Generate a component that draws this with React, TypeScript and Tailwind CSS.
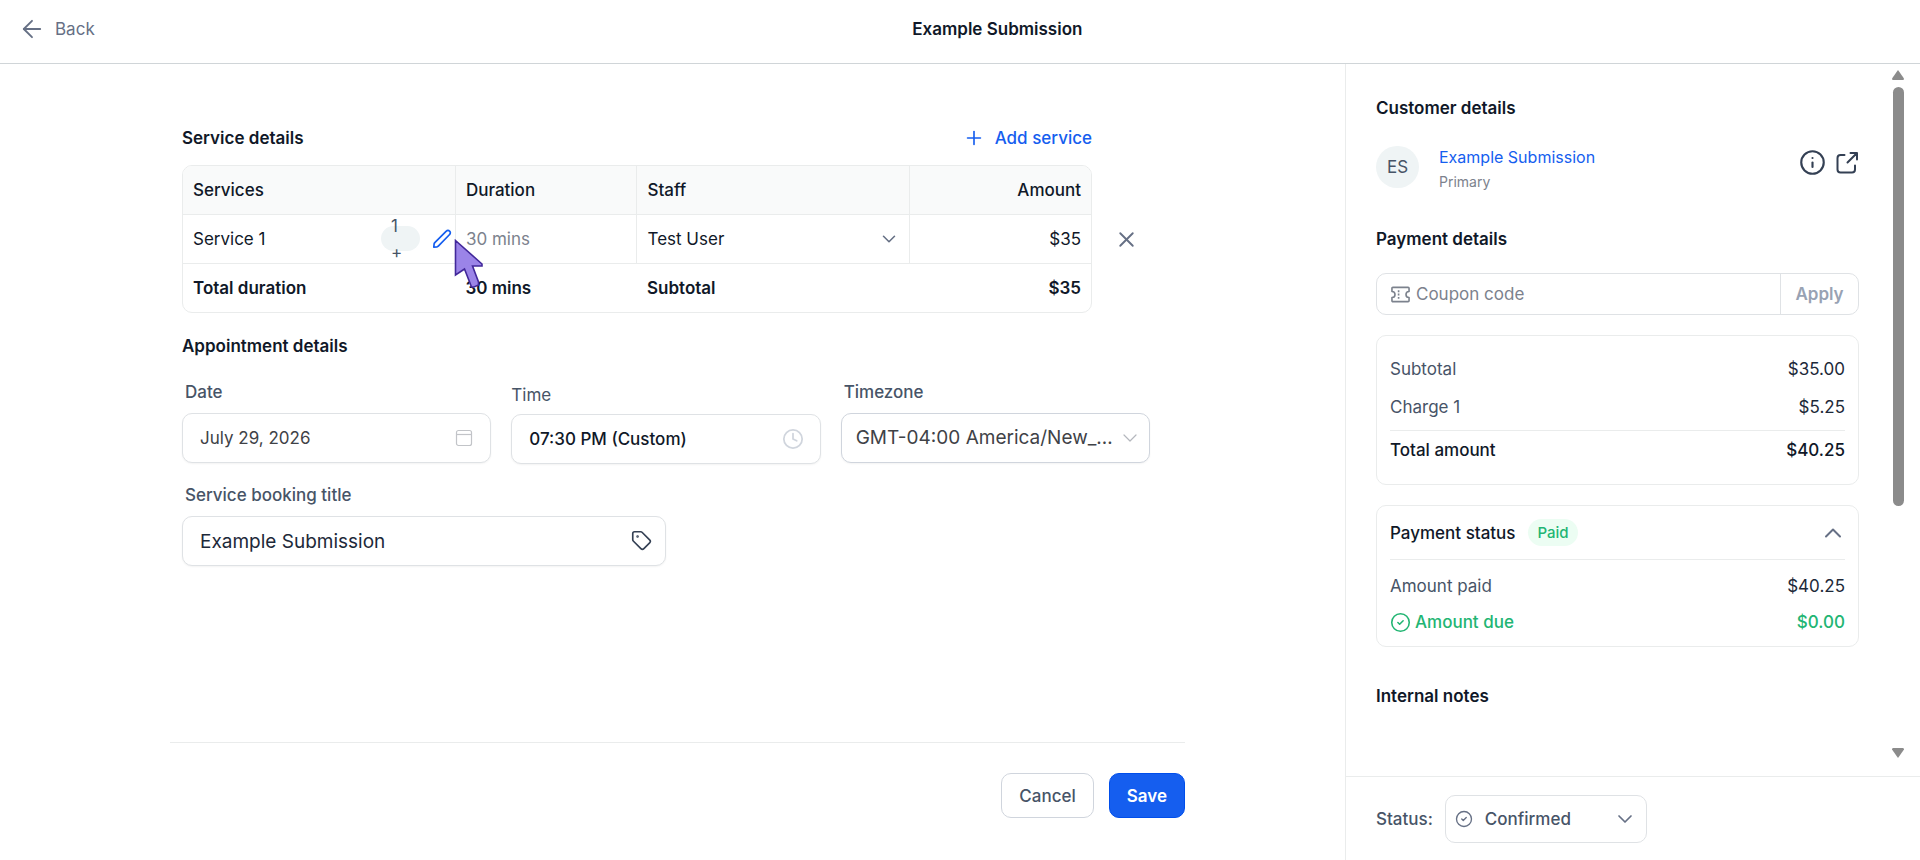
import { useState } from 'react';
import { ArrowLeft, ChevronDown, ChevronUp, CircleCheck, Clock, Info, Plus, Tag, X } from 'lucide-react';

const charges = [
  { label: 'Subtotal', amount: '$35.00' },
  { label: 'Charge 1', amount: '$5.25' },
];

const inputClass =
  'h-[50px] w-full rounded-[10px] border border-[#dfe2e5] bg-white pl-[17px] pr-12 shadow-xs outline-none focus:border-[#155eef]';

const PencilIcon = () => (
  <svg width="20" height="20" viewBox="0 0 20 20" fill="none" stroke="currentColor" strokeWidth="1.7" strokeLinejoin="round">
    <path d="M1.800 18.200l.3-3.200c.1-.6.3-1 .7-1.400L14.300 2.200a2.200 2.200 0 0 1 3.300 0 2.200 2.200 0 0 1 0 3.300L6.300 17.100c-.4.4-.8.6-1.400.7z" />
  </svg>
);

const CalendarIcon = () => (
  <svg
    className="pointer-events-none absolute right-[18px] top-4"
    width="18" height="18" viewBox="0 0 18 18" fill="none" stroke="#c2c4c8" strokeWidth="1.2"
  >
    <rect x="1.500" y="1.500" width="15" height="15" rx="2" />
    <path d="M1.500 5.500h15" />
  </svg>
);

const TicketIcon = () => (
  <svg width="19" height="19" viewBox="0 0 20 20" fill="none" stroke="currentColor" strokeWidth="1.7" strokeLinejoin="round">
    <path d="M2 2.500h16a1 1 0 0 1 1 1v3.300a3.200 3.200 0 0 0 0 6.400v3.300a1 1 0 0 1-1 1H2a1 1 0 0 1-1-1v-3.300a3.200 3.200 0 0 0 0-6.400V3.500a1 1 0 0 1 1-1z" />
    <path d="M8 5.500v2M8 9v2M8 12.500v2" />
  </svg>
);

const ShareIcon = () => (
  <svg width="24" height="24" viewBox="0 0 24 24" fill="none" stroke="currentColor" strokeWidth="2" strokeLinecap="round" strokeLinejoin="round">
    <path d="M9.500 4H5.500a3 3 0 0 0-3 3v11.500a3 3 0 0 0 3 3H17a3 3 0 0 0 3-3V14.500" />
    <path d="M15.500 2H22v6.500M22 2L12.500 11.500" />
  </svg>
);

const ServiceTable = () => (
  <div className="flex items-center">
    <div className="min-w-0 flex-1 overflow-hidden rounded-[10px] border border-[#eaecec]">
      <table className="w-full table-fixed text-left text-[#101828]">
        <thead>
          <tr className="h-12 bg-[#f9fafa]">
            <th className="w-[30%] border-r border-[#eaecec] px-2.5 font-medium">Services</th>
            <th className="w-[20%] border-r border-[#eaecec] px-2.5 font-medium">Duration</th>
            <th className="w-[30%] border-r border-[#eaecec] px-2.5 font-medium">Staff</th>
            <th className="w-[20%] px-2.5 text-right font-medium">Amount</th>
          </tr>
        </thead>
        <tbody>
          <tr className="h-[49px] border-y border-[#eaecec]">
            <td className="border-r border-[#eaecec] pl-2.5 pr-[3px]">
              <div className="flex items-center">
                <span className="flex-1">Service 1</span>
                <span className="mr-3 flex h-[25px] w-[39px] flex-col justify-center rounded-full bg-[#eff4f5] pl-2.5 leading-[26px] text-[#475467]">
                  <span>1</span>
                  <span>+</span>
                </span>
                <button type="button" aria-label="Edit service" className="text-[#155eef]">
                  <PencilIcon />
                </button>
              </div>
            </td>
            <td className="border-r border-[#eaecec] px-2.5 text-[#7c828d]">30 mins</td>
            <td className="border-r border-[#eaecec] px-2.5">
              <div className="relative">
                <select aria-label="Staff" className="block w-full appearance-none bg-transparent outline-none">
                  <option>Test User</option>
                </select>
                <ChevronDown size={22} strokeWidth={1.7} className="pointer-events-none absolute -right-px top-0.5 text-[#667085]" />
              </div>
            </td>
            <td className="px-2.5 text-right">$35</td>
          </tr>
          <tr className="h-[49px] font-semibold">
            <td className="px-2.5">Total duration</td>
            <td className="px-2.5">30 mins</td>
            <td className="px-2.5">Subtotal</td>
            <td className="px-2.5 text-right">$35</td>
          </tr>
        </tbody>
      </table>
    </div>
    <button type="button" aria-label="Remove service" className="ml-[18px] mr-2 flex h-8 w-8 items-center justify-center text-[#667085]">
      <X size={25} strokeWidth={1.8} />
    </button>
  </div>
);

const AppointmentForm = () => {
  const [title, setTitle] = useState('Example Submission');

  return (
    <>
      <div className="mt-5 grid grid-cols-3 gap-x-5">
        <div>
          <label htmlFor="date" className="block pl-[3px] font-medium text-[#475467]">Date</label>
          <div className="relative mt-2">
            <input id="date" defaultValue="July 29, 2026" className={`${inputClass} text-[#404247]`} />
            <CalendarIcon />
          </div>
        </div>
        <div className="pt-[3px]">
          <label htmlFor="time" className="block text-[#475467]">Time</label>
          <div className="relative mt-1.5">
            <input id="time" defaultValue="07:30 PM (Custom)" className={`${inputClass} font-medium text-[#101828]`} />
            <Clock size={22} strokeWidth={1.9} className="pointer-events-none absolute right-[17px] top-3.5 text-[#d0d5dd]" />
          </div>
        </div>
        <div>
          <label htmlFor="timezone" className="block pl-[3px] font-medium text-[#475467]">Timezone</label>
          <div className="relative mt-2">
            <select
              id="timezone"
              className="h-[50px] w-full appearance-none truncate rounded-[10px] border border-[#d0d5dd] bg-white pl-3.5 pr-9 text-[19px] text-[#404247] shadow-xs outline-none"
            >
              <option>GMT-04:00 America/New_York</option>
            </select>
            <ChevronDown size={24} strokeWidth={1.2} className="pointer-events-none absolute right-2 top-[13px] text-[#b4b7bd]" />
          </div>
        </div>
      </div>

      <div className="mt-[18px] w-1/2">
        <label htmlFor="title" className="block pl-[3px] font-medium text-[#475467]">Service booking title</label>
        <div className="relative mt-2">
          <input
            id="title"
            value={title}
            onChange={(e) => setTitle(e.target.value)}
            className={`${inputClass} text-[19px] text-[#1d2939]`}
          />
          <Tag size={21} strokeWidth={1.9} className="pointer-events-none absolute right-3.5 top-3.5 text-[#344054]" />
        </div>
      </div>
    </>
  );
};

const Sidebar = () => (
  <aside className="flex w-[575px] shrink-0 flex-col border-l border-[#eaecec]">
    <div className="flex min-h-0 flex-1 pr-4">
      <div className="min-w-0 flex-1 overflow-hidden pl-[30px] pt-[31px]">
        <h2 className="font-semibold">Customer details</h2>
        <div className="mt-6 flex items-start">
          <span className="mt-px flex h-[42px] w-[43px] items-center justify-center rounded-full bg-[#eff4f5] text-[#475467]">ES</span>
          <div className="ml-5 flex-1">
            <a href="#customer" className="block text-base leading-6 text-[#155eef]">Example Submission</a>
            <p className="text-sm leading-[26px] text-[#7c828d]">Primary</p>
          </div>
          <div className="mt-1 flex items-center gap-[9px] text-[#344054]">
            <button type="button" aria-label="Customer info"><Info size={27} strokeWidth={1.9} /></button>
            <button type="button" aria-label="Open customer"><ShareIcon /></button>
          </div>
        </div>

        <h2 className="mt-[31px] font-semibold">Payment details</h2>
        <div className="mt-[21px] flex h-[42px] rounded-[10px] border border-[#dfe2e5]">
          <label htmlFor="coupon" className="flex items-center pl-3.5 text-[#7c828d]" aria-label="Coupon code">
            <TicketIcon />
          </label>
          <input id="coupon" placeholder="Coupon code" className="min-w-0 flex-1 pl-1.5 outline-none placeholder:text-[#7c828d]" />
          <button type="button" className="w-[78px] border-l border-[#dfe2e5] font-semibold text-[#98a2b3]">Apply</button>
        </div>

        <section className="mt-5 rounded-[10px] border border-[#eaecec] px-[13px] pb-[21px] pt-5">
          {charges.map((charge) => (
            <div key={charge.label} className="mb-3 flex justify-between">
              <span className="text-[#475467]">{charge.label}</span>
              <span className="text-[#1d2939]">{charge.amount}</span>
            </div>
          ))}
          <div className="-mt-0.5 flex justify-between border-t border-[#eaecec] pt-1.5 font-medium">
            <span>Total amount</span>
            <span>$40.25</span>
          </div>
        </section>

        <section className="mt-5 rounded-[10px] border border-[#eaecec] px-[13px] pb-[11px]">
          <div className="flex h-[54px] items-center border-b border-[#eaecec]">
            <h3 className="font-medium">Payment status</h3>
            <span className="ml-[13px] rounded-full bg-[#ecfdf3] px-[9px] text-[15px] font-medium leading-[27px] text-[#22b573]">Paid</span>
            <button type="button" aria-label="Collapse payment status" className="-mr-0.5 ml-auto text-[#667085]">
              <ChevronUp size={28} strokeWidth={1.7} />
            </button>
          </div>
          <div className="mt-[13px] flex justify-between">
            <span className="text-[#475467]">Amount paid</span>
            <span className="text-[#1d2939]">$40.25</span>
          </div>
          <div className="mt-2.5 flex justify-between font-medium text-[#22b573]">
            <span className="flex items-center gap-1">
              <CircleCheck size={21} strokeWidth={1.8} />
              Amount due
            </span>
            <span>$0.00</span>
          </div>
        </section>

        <h2 className="mt-9 font-semibold">Internal notes</h2>
      </div>

      {/* Scroll track */}
      <div className="ml-[33px] flex w-3 flex-col items-center pb-[18px] pt-1.5" aria-hidden="true">
        <svg width="12" height="10" viewBox="0 0 12 10" fill="#8b8b8b"><path d="M6 0l6 8.500q0 1.500-1 1.500H1q-1 0-1-1.500z" /></svg>
        <div className="my-[7px] w-full flex-1">
          <div className="mx-auto h-[64%] w-[11px] rounded-full bg-[#8b8b8b]" />
        </div>
        <svg width="12" height="10" viewBox="0 0 12 10" fill="#8b8b8b"><path d="M6 10L0 1.500Q0 0 1 0h10q1 0 1 1.500z" /></svg>
      </div>
    </div>

    <div className="flex h-[84px] items-center border-t border-[#eaecec] pl-[30px] pt-px">
      <label htmlFor="status" className="font-medium text-[#475467]">Status:</label>
      <div className="relative ml-3">
        <CircleCheck size={18} strokeWidth={1.8} className="pointer-events-none absolute left-2.5 top-[15px] text-[#667085]" />
        <select id="status" className="block h-12 w-[202px] appearance-none rounded-[10px] border border-[#dfe2e5] bg-white pl-[39px] font-medium text-[#475467] outline-none">
          <option>Confirmed</option>
        </select>
        <ChevronDown size={24} strokeWidth={1.7} className="pointer-events-none absolute right-2.5 top-3 text-[#667085]" />
      </div>
    </div>
  </aside>
);

const Pointer = () => (
  <svg className="pointer-events-none absolute left-[454px] top-[239px]" width="30" height="50" viewBox="0 0 30 50" fill="#9b84e8" stroke="#42289a" strokeWidth="1.600" aria-hidden="true">
    <path d="M1.500 1.500L28 25v2h-9.500L24.500 43v3L20 48h-2.500L10.500 30 1.500 36z" />
  </svg>
);

export default function App() {
  return (
    <div className="relative flex h-screen min-h-[700px] flex-col bg-white font-['Inter',sans-serif] text-[17px] leading-[26px] text-[#101828]">
      <header className="flex h-16 shrink-0 items-center border-b border-[#d0d5d8] pb-1.5">
        <a href="#back" className="flex items-center gap-[9px] pl-[18px] text-[#667085]">
          <ArrowLeft size={28} strokeWidth={1.6} />
          Back
        </a>
        <h1 className="flex-1 pr-5 text-center font-semibold">Example Submission</h1>
      </header>

      <div className="flex min-h-0 flex-1">
        <main className="flex min-w-0 flex-1 flex-col">
          <div className="flex-1 pl-[182px] pr-[195px] pt-[61px]">
            <div className="mb-3.5 mr-[58px] flex items-center justify-between">
              <h2 className="font-semibold">Service details</h2>
              <button type="button" className="flex items-center gap-2.5 font-medium text-[#155eef]">
                <Plus size={22} strokeWidth={1.8} />
                Add service
              </button>
            </div>
            <ServiceTable />
            <h2 className="mt-5 font-semibold">Appointment details</h2>
            <AppointmentForm />
          </div>

          <footer className="ml-[170px] mr-[160px] flex h-[118px] justify-end gap-[15px] border-t border-[#eaecec] pt-[30px]">
            <button type="button" className="h-[45px] rounded-[10px] border border-[#d0d5dd] px-[17px] font-medium text-[#475467]">Cancel</button>
            <button type="button" className="h-[45px] rounded-[10px] border border-[#004eeb] bg-[#155eef] px-[17px] font-semibold text-white">Save</button>
          </footer>
        </main>
        <Sidebar />
      </div>
      <Pointer />
    </div>
  );
}
